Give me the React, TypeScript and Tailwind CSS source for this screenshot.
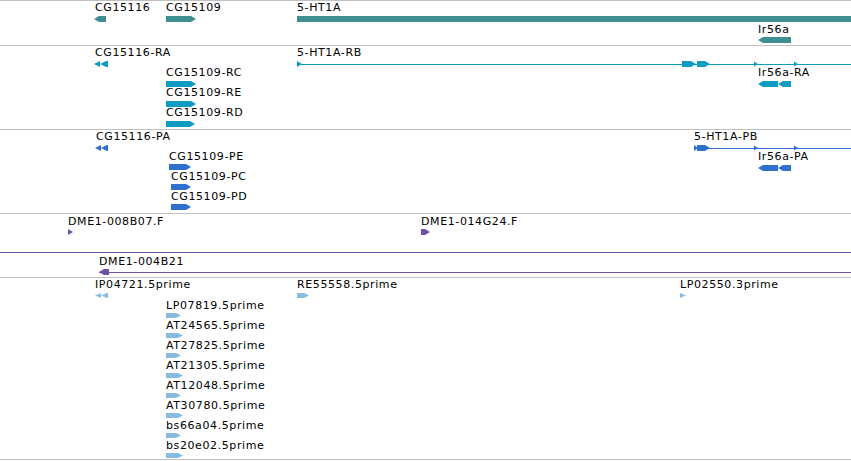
import React from 'react';

const VIEW_W = 851;

type Kind = 'right' | 'left' | 'left2' | 'tri' | 'bar' | 'nub';

interface Part {
  x: number;
  w: number;
  kind: Kind;
  h?: number;
}

interface Feature {
  label: string;
  lx: number;
  ly: number;
  gy: number;
  parts: Part[];
  line?: boolean;
  h?: number;
}

interface Track {
  height: string;
  color: string;
  features: Feature[];
  rules?: number[];
}

const shape = (kind: Kind, w: number, h: number) => {
  const m = h / 2;
  switch (kind) {
    case 'right':
      return [`0,0 ${w - 5},0 ${w},${m} ${w - 5},${h} 0,${h}`];
    case 'left':
      return [`0,${m} 5,0 ${w},0 ${w},${h} 5,${h}`];
    case 'left2':
      return [`0,${m} 6,0 6,${h}`, `6,${m} 12,0 ${w},0 ${w},${h} 12,${h}`];
    case 'tri':
    case 'nub':
      return [`0,0 ${w},${m} 0,${h}`];
    default:
      return [`0,0 ${w},0 ${w},${h} 0,${h}`];
  }
};

const FeatureGlyph = ({ f, color }: { f: Feature; color: string }) => {
  const h = f.h ?? 6;
  const start = f.parts[0].x;
  const end = f.line ? VIEW_W : Math.max(...f.parts.map((p) => p.x + p.w));
  return (
    <svg
      className="absolute overflow-visible"
      style={{ left: start, top: f.gy }}
      width={end - start}
      height={h}
    >
      {f.line && <rect x={0} y={Math.floor(h / 2)} width={end - start} height={1} fill={color} />}
      {f.parts.map((p, i) => {
        const ph = p.h ?? h;
        const oy = (h - ph) / 2;
        return shape(p.kind, p.w, ph).map((pt, j) => (
          <polygon
            key={`${i}-${j}`}
            points={pt}
            fill={color}
            transform={`translate(${p.x - start},${oy})`}
          />
        ));
      })}
    </svg>
  );
};

const estNames = [
  'LP07819.5prime',
  'AT24565.5prime',
  'AT27825.5prime',
  'AT21305.5prime',
  'AT12048.5prime',
  'AT30780.5prime',
  'bs66a04.5prime',
  'bs20e02.5prime',
];

const tracks: Track[] = [
  {
    height: 'h-[45px]',
    color: '#3f8e91',
    features: [
      { label: 'CG15116', lx: 95, ly: 1, gy: 15, parts: [{ x: 94, w: 12, kind: 'left' }] },
      { label: 'CG15109', lx: 166, ly: 1, gy: 15, parts: [{ x: 166, w: 30, kind: 'right' }] },
      { label: '5-HT1A', lx: 297, ly: 1, gy: 15, parts: [{ x: 297, w: VIEW_W - 297, kind: 'bar' }] },
      { label: 'Ir56a', lx: 758, ly: 23, gy: 36, parts: [{ x: 758, w: 33, kind: 'left' }] },
    ],
  },
  {
    height: 'h-[84px]',
    color: '#0e9dc1',
    features: [
      { label: 'CG15116-RA', lx: 95, ly: 1, gy: 15, parts: [{ x: 94, w: 14, kind: 'left2' }] },
      {
        label: '5-HT1A-RB',
        lx: 297,
        ly: 1,
        gy: 15,
        line: true,
        parts: [
          { x: 297, w: 5, kind: 'nub' },
          { x: 682, w: 14, kind: 'right' },
          { x: 697, w: 13, kind: 'right' },
          { x: 754, w: 4, kind: 'tri', h: 5 },
          { x: 794, w: 4, kind: 'tri', h: 5 },
        ],
      },
      { label: 'CG15109-RC', lx: 166, ly: 21, gy: 35, parts: [{ x: 166, w: 30, kind: 'right' }] },
      { label: 'CG15109-RE', lx: 166, ly: 41, gy: 55, parts: [{ x: 166, w: 30, kind: 'right' }] },
      { label: 'CG15109-RD', lx: 166, ly: 61, gy: 75, parts: [{ x: 166, w: 29, kind: 'right' }] },
      {
        label: 'Ir56a-RA',
        lx: 758,
        ly: 21,
        gy: 35,
        parts: [
          { x: 758, w: 20, kind: 'left' },
          { x: 778, w: 13, kind: 'left' },
        ],
      },
    ],
  },
  {
    height: 'h-[84px]',
    color: '#2f6fcd',
    features: [
      { label: 'CG15116-PA', lx: 96, ly: 1, gy: 15, parts: [{ x: 95, w: 13, kind: 'left2' }] },
      { label: 'CG15109-PE', lx: 169, ly: 21, gy: 34, parts: [{ x: 169, w: 22, kind: 'right' }] },
      { label: 'CG15109-PC', lx: 171, ly: 41, gy: 54, parts: [{ x: 171, w: 20, kind: 'right' }] },
      { label: 'CG15109-PD', lx: 171, ly: 61, gy: 74, parts: [{ x: 171, w: 20, kind: 'right' }] },
      {
        label: '5-HT1A-PB',
        lx: 694,
        ly: 1,
        gy: 15,
        line: true,
        parts: [
          { x: 694, w: 4, kind: 'nub' },
          { x: 697, w: 13, kind: 'right' },
          { x: 754, w: 4, kind: 'tri', h: 5 },
          { x: 794, w: 4, kind: 'tri', h: 5 },
        ],
      },
      {
        label: 'Ir56a-PA',
        lx: 758,
        ly: 21,
        gy: 35,
        parts: [
          { x: 758, w: 20, kind: 'left' },
          { x: 778, w: 13, kind: 'left' },
        ],
      },
    ],
  },
  {
    height: 'h-[64px]',
    color: '#6e51a7',
    rules: [38],
    features: [
      { label: 'DME1-008B07.F', lx: 68, ly: 2, gy: 15, parts: [{ x: 68, w: 5, kind: 'tri' }] },
      { label: 'DME1-014G24.F', lx: 421, ly: 2, gy: 15, parts: [{ x: 421, w: 9, kind: 'right' }] },
      {
        label: 'DME1-004B21',
        lx: 99,
        ly: 42,
        gy: 55,
        line: true,
        parts: [{ x: 99, w: 10, kind: 'left' }],
      },
    ],
  },
  {
    height: 'h-[182px]',
    color: '#88bcdf',
    features: [
      { label: 'IP04721.5prime', lx: 95, ly: 1, gy: 15, h: 5, parts: [{ x: 95, w: 13, kind: 'left2' }] },
      { label: 'RE55558.5prime', lx: 297, ly: 1, gy: 15, h: 5, parts: [{ x: 297, w: 12, kind: 'right' }] },
      { label: 'LP02550.3prime', lx: 680, ly: 1, gy: 15, h: 5, parts: [{ x: 680, w: 6, kind: 'tri' }] },
      ...estNames.map((name, i) => ({
        label: name,
        lx: 166,
        ly: 22 + i * 20,
        gy: 35 + i * 20,
        h: 5,
        parts: [{ x: 166, w: i % 2 ? 17 : 15, kind: 'right' as Kind }],
      })),
    ],
  },
];

export default function App() {
  return (
    <div className="w-[851px] h-[461px] overflow-hidden bg-white font-['DejaVu_Sans',sans-serif] text-[11px] leading-[12px] tracking-[0.6px] text-black">
      <div className="border-t border-[#c0c0c0]">
        {tracks.map((track, ti) => (
          <div key={ti} className={`relative ${track.height} border-b border-[#c0c0c0]`}>
            {track.rules?.map((y) => (
              <div
                key={y}
                className="absolute left-0 right-0 h-px"
                style={{ top: y, backgroundColor: track.color }}
              />
            ))}
            {track.features.map((f) => (
              <React.Fragment key={f.label}>
                <div className="absolute whitespace-nowrap" style={{ left: f.lx, top: f.ly }}>
                  {f.label}
                </div>
                <FeatureGlyph f={f} color={track.color} />
              </React.Fragment>
            ))}
          </div>
        ))}
      </div>
    </div>
  );
}
